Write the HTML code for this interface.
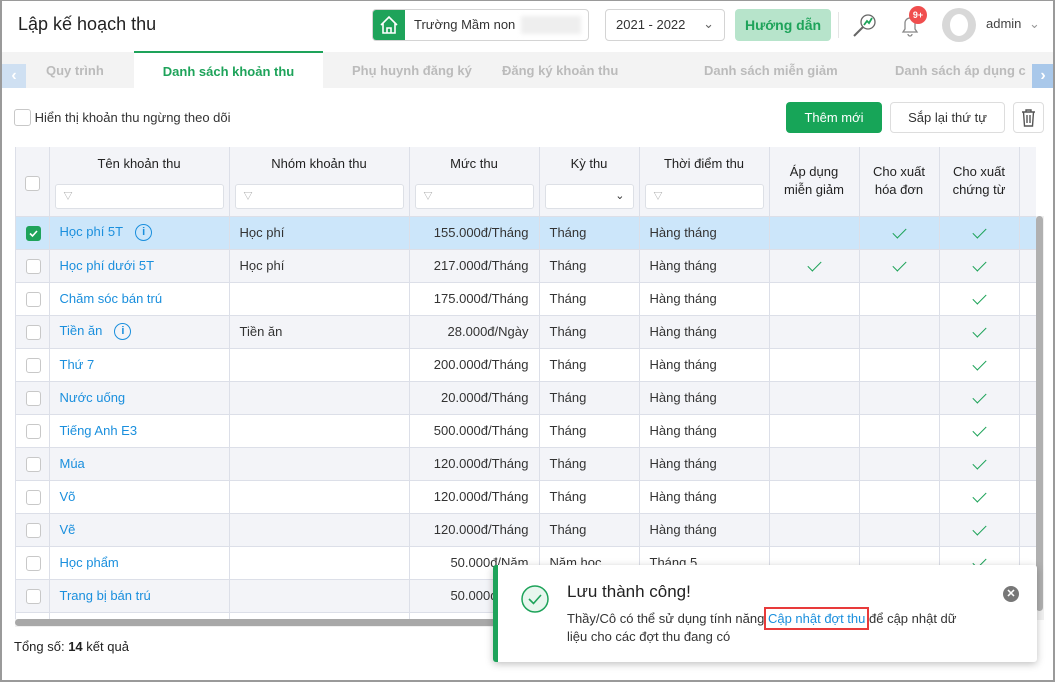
<!DOCTYPE html>
<html><head><meta charset="utf-8"><style>
*{box-sizing:border-box;margin:0;padding:0}
body{width:1055px;height:682px;overflow:hidden;font-family:"Liberation Sans","Noto Sans CJK SC",sans-serif;font-size:13px;color:#333;background:#fff;position:relative}
.frame{position:absolute;left:0;top:0;width:1055px;height:682px;border:2px solid #9a9a9a;border-top:1px solid #9a9a9a;pointer-events:none;z-index:50}
.abs{position:absolute}
.tbl{position:absolute;left:15px;top:147px;width:1021px;height:472px;overflow:hidden;border-left:1px solid #dcdfe8}
.tbl table{border-collapse:collapse;table-layout:fixed;width:1060px}
.tbl td,.tbl th{border-right:1px solid #dcdfe8;border-bottom:1px solid #dcdfe8;height:33px;padding:0 10px;white-space:nowrap;overflow:hidden}
.tbl th{background:#f3f4f8;font-weight:normal;color:#222;height:69px;vertical-align:top;padding-top:9px;font-size:13px}
.tbl tr.e td{background:#f3f4f8}
.tbl tr.s td{background:#cce6fa}
a{color:#1a8fdd;text-decoration:none}
.cb{display:inline-block;width:15px;height:15px;border:1px solid #c8c8c8;border-radius:3px;background:#fff;vertical-align:middle}
.cbon{background:#1ea35a;border-color:#1ea35a;position:relative}
.flt{margin-top:13px;height:25px;border:1px solid #dde0e6;border-radius:3px;background:#fff;text-align:left;padding-left:8px;font-size:9px;color:#999;line-height:23px}
.ck{text-align:center}
.ck::before{content:"";display:inline-block;width:12px;height:6px;border-left:1.6px solid #1ea35a;border-bottom:1.6px solid #1ea35a;transform:rotate(-45deg);margin-top:-4px;vertical-align:middle}
.r{text-align:right}
.c{text-align:center}
.info{display:inline-block;width:17px;height:17px;border:1.5px solid #1a8fdd;border-radius:50%;color:#1a8fdd;font-size:11px;text-align:center;line-height:14px;margin-left:12px;vertical-align:middle;font-weight:bold}
.tab{position:absolute;top:52px;height:36px;line-height:38px;font-size:13px;color:#bbb;font-weight:bold}
</style></head><body>
<div class="frame"></div>
<div class="abs" style="left:18px;top:14px;font-size:18px;color:#222">Lập kế hoạch thu</div>
<div class="abs" style="left:372px;top:9px;width:217px;height:32px;border:1px solid #d4d4d4;border-radius:4px;overflow:hidden">
 <div class="abs" style="left:0;top:0;width:32px;height:30px;background:#1ea35a"><svg width="32" height="30" viewBox="0 0 32 30"><path d="M8 15 L16 7 L24 15 M10 13 V23 H22 V13 M14 23 V18 H18 V23" fill="none" stroke="#fff" stroke-width="1.6"/></svg></div>
 <div class="abs" style="left:41px;top:7px;font-size:13px;color:#333">Trường Mầm non</div>
 <div class="abs" style="left:148px;top:6px;width:60px;height:18px;background:#eee;filter:blur(2px)"></div>
</div>
<div class="abs" style="left:605px;top:9px;width:120px;height:32px;border:1px solid #d4d4d4;border-radius:4px;padding:7px 10px;font-size:13px">2021 - 2022<span style="position:absolute;right:10px;top:6px;color:#666">⌄</span></div>
<div class="abs" style="left:735px;top:9px;width:96px;height:32px;background:#b7e4cb;border-radius:4px;color:#1ea35a;font-weight:bold;text-align:center;line-height:32px;font-size:14px">Hướng dẫn</div>
<div class="abs" style="left:838px;top:12px;width:1px;height:26px;background:#e5e5e5"></div>
<svg class="abs" style="left:850px;top:10px" width="30" height="30" viewBox="0 0 30 30"><circle cx="18" cy="12" r="7" fill="none" stroke="#666" stroke-width="1.3"/><path d="M13 17 L4 26" stroke="#666" stroke-width="2"/><path d="M14 15 L17 11 L19 13 L22 8" stroke="#1ea35a" stroke-width="1.8" fill="none"/></svg>
<svg class="abs" style="left:895px;top:10px" width="30" height="30" viewBox="0 0 30 30"><path d="M8 22 H22 L20 19 V13 A5 5 0 0 0 10 13 V19 Z M13 24 A2 2 0 0 0 17 24" fill="none" stroke="#888" stroke-width="1.3"/></svg>
<div class="abs" style="left:909px;top:6px;width:18px;height:18px;border-radius:50%;background:#f04e4e;color:#fff;font-size:9px;font-weight:bold;text-align:center;line-height:18px">9+</div>
<div class="abs" style="left:942px;top:8px;width:34px;height:34px;border-radius:50%;background:#d8d8d8;overflow:hidden"><div style="margin:6px auto 0;width:18px;height:22px;border-radius:50%;background:#fff"></div></div>
<div class="abs" style="left:986px;top:16px;font-size:13px;color:#444">admin <span style="color:#999;margin-left:4px">⌄</span></div>
<div class="abs" style="left:2px;top:52px;width:1051px;height:36px;background:#f3f3f3"></div>
<div class="abs" style="left:2px;top:64px;width:24px;height:24px;background:#cfe0f2;color:#fff;font-weight:bold;text-align:center;line-height:24px;font-size:16px">‹</div>
<div class="abs" style="left:1032px;top:64px;width:22px;height:24px;background:#a9c8ea;color:#fff;font-weight:bold;text-align:center;line-height:24px;font-size:16px">›</div>
<div class="tab" style="left:46px">Quy trình</div>
<div class="abs" style="left:134px;top:51px;width:189px;height:37px;background:#fff;border-top:2px solid #1ea35a;color:#1ea35a;font-weight:bold;text-align:center;line-height:38px;font-size:13px">Danh sách khoản thu</div>
<div class="tab" style="left:352px">Phụ huynh đăng ký</div>
<div class="tab" style="left:502px">Đăng ký khoản thu</div>
<div class="tab" style="left:704px">Danh sách miễn giảm</div>
<div class="tab" style="left:895px;width:132px;overflow:hidden;white-space:nowrap">Danh sách áp dụng c</div>
<div class="abs" style="left:14px;top:109px"><span class="cb" style="width:17px;height:17px"></span> <span style="font-size:13px;color:#333;vertical-align:middle">Hiển thị khoản thu ngừng theo dõi</span></div>
<div class="abs" style="left:786px;top:102px;width:96px;height:31px;background:#17a558;border-radius:4px;color:#fff;text-align:center;line-height:31px;font-size:13px">Thêm mới</div>
<div class="abs" style="left:890px;top:102px;width:115px;height:31px;border:1px solid #ddd;border-radius:4px;text-align:center;line-height:29px;font-size:13px">Sắp lại thứ tự</div>
<div class="abs" style="left:1013px;top:102px;width:31px;height:31px;border:1px solid #ddd;border-radius:4px"><svg width="29" height="29" viewBox="0 0 29 29"><path d="M8 9 H21 M12 9 V7 H17 V9 M9.5 9 L10.5 23 H18.5 L19.5 9 M13 12 V20 M16 12 V20" fill="none" stroke="#555" stroke-width="1.4"/></svg></div>
<div class="tbl"><table>
<colgroup><col style="width:33px"><col style="width:180px"><col style="width:180px"><col style="width:130px"><col style="width:100px"><col style="width:130px"><col style="width:90px"><col style="width:80px"><col style="width:80px"><col style="width:57px"></colgroup>
<tr><th style="padding:28px 0 0 0" class="c"><span class="cb"></span></th>
<th class="c" style="padding:9px 5px 0">Tên khoản thu<div class="flt">▽</div></th>
<th class="c" style="padding:9px 5px 0">Nhóm khoản thu<div class="flt">▽</div></th>
<th class="c" style="padding:9px 5px 0">Mức thu<div class="flt">▽</div></th>
<th class="c" style="padding:9px 5px 0">Kỳ thu<div class="flt" style="text-align:right;padding-right:8px;font-size:11px;color:#333">⌄</div></th>
<th class="c" style="padding:9px 5px 0">Thời điểm thu<div class="flt">▽</div></th>
<th class="c" style="padding:16px 0 0;line-height:18px">Áp dụng<br>miễn giảm</th>
<th class="c" style="padding:16px 0 0;line-height:18px">Cho xuất<br>hóa đơn</th>
<th class="c" style="padding:16px 0 0;line-height:18px">Cho xuất<br>chứng từ</th>
<th style="padding:16px 0 0 8px;line-height:18px">Cho<br>hoá</th></tr>
<tr class="s"><td class="c"><span class="cb cbon"><svg width="13" height="13" viewBox="0 0 13 13" style="display:block"><path d="M3 6.5 L5.5 9 L10 4" stroke="#fff" stroke-width="1.6" fill="none"/></svg></span></td><td><a>Học phí 5T</a><span class="info">i</span></td><td>Học phí</td><td class="r">155.000đ/Tháng</td><td>Tháng</td><td>Hàng tháng</td><td></td><td class="ck"></td><td class="ck"></td><td></td></tr>
<tr class="e"><td class="c"><span class="cb"></span></td><td><a>Học phí dưới 5T</a></td><td>Học phí</td><td class="r">217.000đ/Tháng</td><td>Tháng</td><td>Hàng tháng</td><td class="ck"></td><td class="ck"></td><td class="ck"></td><td></td></tr>
<tr><td class="c"><span class="cb"></span></td><td><a>Chăm sóc bán trú</a></td><td></td><td class="r">175.000đ/Tháng</td><td>Tháng</td><td>Hàng tháng</td><td></td><td></td><td class="ck"></td><td></td></tr>
<tr class="e"><td class="c"><span class="cb"></span></td><td><a>Tiền ăn</a><span class="info">i</span></td><td>Tiền ăn</td><td class="r">28.000đ/Ngày</td><td>Tháng</td><td>Hàng tháng</td><td></td><td></td><td class="ck"></td><td></td></tr>
<tr><td class="c"><span class="cb"></span></td><td><a>Thứ 7</a></td><td></td><td class="r">200.000đ/Tháng</td><td>Tháng</td><td>Hàng tháng</td><td></td><td></td><td class="ck"></td><td></td></tr>
<tr class="e"><td class="c"><span class="cb"></span></td><td><a>Nước uống</a></td><td></td><td class="r">20.000đ/Tháng</td><td>Tháng</td><td>Hàng tháng</td><td></td><td></td><td class="ck"></td><td></td></tr>
<tr><td class="c"><span class="cb"></span></td><td><a>Tiếng Anh E3</a></td><td></td><td class="r">500.000đ/Tháng</td><td>Tháng</td><td>Hàng tháng</td><td></td><td></td><td class="ck"></td><td></td></tr>
<tr class="e"><td class="c"><span class="cb"></span></td><td><a>Múa</a></td><td></td><td class="r">120.000đ/Tháng</td><td>Tháng</td><td>Hàng tháng</td><td></td><td></td><td class="ck"></td><td></td></tr>
<tr><td class="c"><span class="cb"></span></td><td><a>Võ</a></td><td></td><td class="r">120.000đ/Tháng</td><td>Tháng</td><td>Hàng tháng</td><td></td><td></td><td class="ck"></td><td></td></tr>
<tr class="e"><td class="c"><span class="cb"></span></td><td><a>Vẽ</a></td><td></td><td class="r">120.000đ/Tháng</td><td>Tháng</td><td>Hàng tháng</td><td></td><td></td><td class="ck"></td><td></td></tr>
<tr><td class="c"><span class="cb"></span></td><td><a>Học phẩm</a></td><td></td><td class="r">50.000đ/Năm</td><td>Năm học</td><td>Tháng 5</td><td></td><td></td><td class="ck"></td><td></td></tr>
<tr class="e"><td class="c"><span class="cb"></span></td><td><a>Trang bị bán trú</a></td><td></td><td class="r">50.000đ/Năm</td><td>Năm học</td><td>Tháng 5</td><td></td><td></td><td class="ck"></td><td></td></tr>
<tr><td></td><td></td><td></td><td></td><td></td><td></td><td></td><td></td><td></td><td></td></tr>
</table></div>
<div class="abs" style="left:1036px;top:216px;width:8px;height:404px;background:#f0f0f0"><div style="width:7px;height:395px;background:#b0b0b0;border-radius:4px"></div></div>
<div class="abs" style="left:15px;top:619px;width:1021px;height:8px;background:#f0f0f0"><div style="width:1000px;height:7px;background:#a8a8a8;border-radius:4px"></div></div>
<div class="abs" style="left:14px;top:639px;font-size:13px;color:#222">Tổng số: <b>14</b> kết quả</div>
<div class="abs" style="left:493px;top:565px;width:544px;height:97px;background:#fff;border-left:5px solid #1ea35a;border-radius:3px;box-shadow:0 2px 8px rgba(0,0,0,.25)">
 <svg class="abs" style="left:22px;top:19px" width="30" height="30" viewBox="0 0 30 30"><circle cx="15" cy="15" r="13" fill="#e8f6ee" stroke="#1ea35a" stroke-width="1.5"/><path d="M9 15 L13.5 19.5 L21 11" stroke="#1ea35a" stroke-width="1.6" fill="none"/></svg>
 <div class="abs" style="left:69px;top:17px;font-size:17px;color:#222">Lưu thành công!</div>
 <div class="abs" style="left:69px;top:45px;width:410px;font-size:13px;line-height:18px;color:#333">Thầy/Cô có thể sử dụng tính năng <a style="color:#1a8fdd;outline:2px solid #e83a3a;outline-offset:2px">Cập nhật đợt thu</a> để cập nhật dữ liệu cho các đợt thu đang có</div>
 <div class="abs" style="left:505px;top:21px;width:16px;height:16px;border-radius:50%;background:#777;color:#fff;font-size:11px;text-align:center;line-height:16px;font-weight:bold">✕</div>
</div>
</body></html>
